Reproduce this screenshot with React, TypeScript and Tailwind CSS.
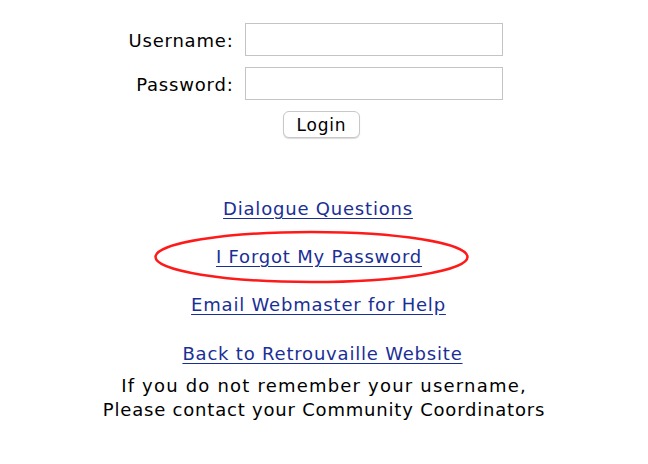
export default function App() {
  return (
    <main
      className="relative h-[464px] w-[648px] bg-white text-[18px] tracking-[0.8px] text-black"
      style={{ fontFamily: '"DejaVu Sans", Verdana, sans-serif' }}
    >
      <div className="flex flex-col items-center pt-[23px]">
        <div className="ml-[-17px] grid grid-cols-[auto_auto] items-center gap-x-[11px] gap-y-[11px]">
          <label className="pt-[2px] text-right">Username:</label>
          <input className="h-[33px] w-[258px] border border-[#c4c4c4] bg-white outline-none" />
          <label className="pt-[2px] text-right">Password:</label>
          <input
            type="password"
            className="h-[33px] w-[258px] border border-[#c4c4c4] bg-white outline-none"
          />
        </div>

        <button className="mt-[11px] ml-[-5px] h-[27px] w-[77px] rounded-[6px] border border-[#c8c8c8] bg-white pt-[1px] text-[17px] leading-none shadow-[0_1px_1px_rgba(0,0,0,0.15)]">
          Login
        </button>

        <div className="mt-[58px] flex flex-col items-center gap-[22px] leading-[26px] text-[#1a2f96]">
          <a href="#" className="mr-[12px] underline underline-offset-[3px]">Dialogue Questions</a>
          <a href="#" className="mr-[10px] underline underline-offset-[3px]">I Forgot My Password</a>
          <a href="#" className="mr-[11px] underline underline-offset-[3px]">Email Webmaster for Help</a>
          <a href="#" className="mt-[1px] mr-[3px] underline underline-offset-[3px]">Back to Retrouvaille Website</a>
        </div>

        <p className="mt-[7px] text-center leading-[24px]">
          <span className="tracking-[1.2px]">If you do not remember your username,</span>
          <br />
          Please contact your Community Coordinators
        </p>
      </div>

      <svg className="pointer-events-none absolute left-0 top-0" width="648" height="464">
        <ellipse cx="311.5" cy="257" rx="156" ry="25" fill="none" stroke="#ff1a1a" strokeWidth="2.5" />
      </svg>
    </main>
  );
}
